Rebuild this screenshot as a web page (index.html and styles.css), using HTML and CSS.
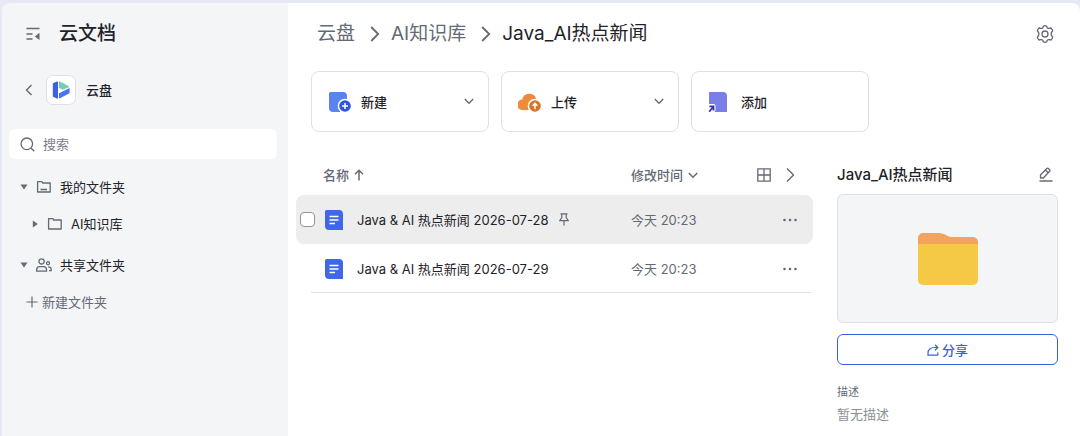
FILE: index.html
```html
<!DOCTYPE html>
<html lang="zh-CN">
<head>
  <meta charset="UTF-8">
  <meta name="viewport" content="width=device-width, initial-scale=1.0">
  <title>云文档</title>
  <link rel="stylesheet" href="styles.css">
</head>
<body>
  <div class="app">
    <aside class="sidebar">
      <div class="sidebar-header">
        <button class="icon-btn" type="button" aria-label="收起侧栏">
          <svg width="16" height="16" viewBox="0 0 16 16" fill="none" stroke="currentColor" stroke-width="1.4">
            <path d="M1.500 2.500h13M1.500 8h6M1.500 13h6"/>
            <path d="M14.500 6.800v7.200L9.800 10.400z" fill="currentColor" stroke="none"/>
          </svg>
        </button>
        <h1>云文档</h1>
      </div>
      <div class="space">
        <button class="icon-btn" type="button" aria-label="返回">
          <svg width="8" height="12" viewBox="0 0 8 12" fill="none" stroke="currentColor" stroke-width="1.4">
            <path d="M6.500 1 1.500 6l5 5"/>
          </svg>
        </button>
        <span class="space-logo">
          <svg width="18" height="18" viewBox="0 0 18 18">
            <path d="M.8 3Q.8 2.400 1.400 2.100L5 .5q1-.3 1 .6v15.800q0 .9-1 .6L1.400 15.900Q.8 15.600.8 15z" fill="#3f62dc"/>
            <path d="M7 .8q.2-.6 1-.2l8.800 4.700q.8.500 0 .9L10.500 8.800 7 6.800z" fill="#6fcdb8"/>
            <path d="M17.600 7v4.600q0 .7-.6 1L8 17.300q-1 .4-1-.5v-4.500z" fill="#4a73ee"/>
          </svg>
        </span>
        <span class="space-name">云盘</span>
      </div>
      <div class="search">
        <svg width="15" height="15" viewBox="0 0 15 15" fill="none" stroke="currentColor" stroke-width="1.3">
          <circle cx="6.800" cy="6.800" r="5.800"/>
          <path d="m11 11 3.200 3.200"/>
        </svg>
        <input type="search" placeholder="搜索" aria-label="搜索">
      </div>
      <nav class="tree">
        <a class="tree-item" href="#">
          <svg class="caret" width="8" height="6" viewBox="0 0 8 6"><path d="M.5.5h7L4 5.600z" fill="currentColor"/></svg>
          <svg class="tree-icon" width="16" height="14" viewBox="0 0 16 14" fill="none" stroke="currentColor" stroke-width="1.3" stroke-linejoin="round">
            <path d="M1.600 12V1.600h4.200l1 1.400h7.400v9zM4.500 9.500h6.500"/>
          </svg>
          我的文件夹
        </a>
        <a class="tree-item child" href="#">
          <svg class="caret" width="8" height="8" viewBox="0 0 8 8"><path d="M1.800.6v6.800L6.800 4z" fill="currentColor"/></svg>
          <svg class="tree-icon" width="16" height="14" viewBox="0 0 16 14" fill="none" stroke="currentColor" stroke-width="1.3" stroke-linejoin="round">
            <path d="M1.600 12V1.600h4.200l1 1.400h7.400v9z"/>
          </svg>
          AI知识库
        </a>
        <a class="tree-item group" href="#">
          <svg class="caret" width="8" height="6" viewBox="0 0 8 6"><path d="M.5.5h7L4 5.600z" fill="currentColor"/></svg>
          <svg class="tree-icon" width="16" height="14" viewBox="0 0 16 14" fill="none" stroke="currentColor" stroke-width="1.300">
            <circle cx="5.600" cy="3.400" r="2.600"/>
            <path d="M.7 13.200v-1.600c0-1.800 1.300-3 3-3h3.800c1.700 0 3 1.200 3 3v1.600z"/>
            <circle cx="12" cy="5.200" r="1.500"/>
            <path d="M12.200 8.800c1.800 0 3 1.200 3 2.600v1.200h-2.200"/>
          </svg>
          共享文件夹
        </a>
        <button class="new-folder" type="button">
          <svg width="12" height="12" viewBox="0 0 12 12" fill="none" stroke="currentColor" stroke-width="1.200">
            <path d="M6 .5v11M.5 6h11"/>
          </svg>
          新建文件夹
        </button>
      </nav>
    </aside>

    <main class="main">
      <header class="topbar">
        <nav class="breadcrumb" aria-label="路径">
          <a href="#">云盘</a>
          <svg width="10" height="16" viewBox="0 0 10 16" fill="none" stroke="currentColor" stroke-width="1.800"><path d="m1.200 1 7 7-7 7"/></svg>
          <a href="#">AI知识库</a>
          <svg width="10" height="16" viewBox="0 0 10 16" fill="none" stroke="currentColor" stroke-width="1.800"><path d="m1.200 1 7 7-7 7"/></svg>
          <span class="current">Java_AI热点新闻</span>
        </nav>
        <button class="icon-btn" type="button" aria-label="设置">
          <svg width="18" height="18" viewBox="0 0 18 18" fill="none" stroke="currentColor" stroke-width="1.300" stroke-linejoin="round">
            <path d="M7.400 1q1.600-.5 3.200 0l.6 1.700q.9.900 2 .7l1.800-.4q1.200 1.200 1.700 2.900l-1.300 1.600q-.5 1.500 0 3l1.300 1.600q-.5 1.700-1.700 2.900l-1.800-.4q-1.100-.2-2 .7l-.6 1.700q-1.600.5-3.200 0l-.6-1.700q-.9-.9-2-.7L3 15q-1.200-1.200-1.700-2.900l1.300-1.600q.5-1.500 0-3L1.300 5.900Q1.800 4.200 3 3l1.800.4q1.100.2 2-.7z"/>
            <circle cx="9" cy="9" r="3"/>
          </svg>
        </button>
      </header>

      <div class="actions">
        <button class="action" type="button">
          <svg width="24" height="22" viewBox="0 0 24 22">
            <path d="M1 2.500A1.500 1.500 0 0 1 2.500 1H15a4 4 0 0 1 4 4v16H5a4 4 0 0 1-4-4z" fill="#5b83f0"/>
            <circle cx="17" cy="15" r="7.300" fill="#fff"/>
            <circle cx="17" cy="15" r="5.800" fill="#2f55d8"/>
            <path d="M17 12v6M14 15h6" stroke="#fff" stroke-width="1.500"/>
          </svg>
          <span>新建</span>
          <svg class="arrow" width="10" height="7" viewBox="0 0 10 7" fill="none" stroke="currentColor" stroke-width="1.300"><path d="m.8 1 4.200 4.300L9.200 1"/></svg>
        </button>
        <button class="action" type="button">
          <svg width="24" height="22" viewBox="0 0 24 22">
            <path d="M5 19A5.300 5.300 0 0 1 4.200 8.400a7.300 7.300 0 0 1 14-.6A5.800 5.800 0 0 1 18 19z" fill="#ee8a3c"/>
            <circle cx="17" cy="15" r="7.300" fill="#fff"/>
            <circle cx="17" cy="15" r="5.800" fill="#d8742a"/>
            <path d="M17 18.200v-5.600m-2.400 2.200 2.400-2.400 2.400 2.400" fill="none" stroke="#fff" stroke-width="1.500"/>
          </svg>
          <span>上传</span>
          <svg class="arrow" width="10" height="7" viewBox="0 0 10 7" fill="none" stroke="currentColor" stroke-width="1.300"><path d="m.8 1 4.200 4.300L9.200 1"/></svg>
        </button>
        <button class="action" type="button">
          <svg width="24" height="22" viewBox="0 0 24 22">
            <path d="M1 1h14a4 4 0 0 1 4 4v16H1z" fill="#7a7fe8"/>
            <path d="M0 13h5.500a2 2 0 0 1 2 2v4l-1.500 3H0z" fill="#fff"/>
            <path d="m1.200 20.800 4-5M1.400 15.300h4.100v4.200" fill="none" stroke="#3a32ae" stroke-width="1.800"/>
          </svg>
          <span>添加</span>
        </button>
      </div>

      <div class="content">
        <table class="files">
          <colgroup>
            <col class="col-check">
            <col class="col-name">
            <col class="col-time">
            <col class="col-more">
          </colgroup>
          <thead>
            <tr>
              <th colspan="2" class="th-name">
                <span class="sort">
                  名称
                  <svg width="10" height="12" viewBox="0 0 10 12" fill="none" stroke="currentColor" stroke-width="1.500"><path d="M5 11.500V1.500M1 5.300l4-4 4 4"/></svg>
                </span>
              </th>
              <th>
                <span class="sort">
                  修改时间
                  <svg width="10" height="7" viewBox="0 0 10 7" fill="none" stroke="currentColor" stroke-width="1.500"><path d="m.8 1 4.200 4.300L9.200 1"/></svg>
                </span>
              </th>
              <th>
                <div class="view-tools">
                  <button class="icon-btn" type="button" aria-label="网格视图">
                    <svg width="14" height="14" viewBox="0 0 14 14" fill="none" stroke="currentColor" stroke-width="1.300"><path d="M.8.8h12.400v12.400H.8zM7 .8v12.400M.8 7h12.400"/></svg>
                  </button>
                  <button class="icon-btn" type="button" aria-label="收起详情">
                    <svg width="9" height="14" viewBox="0 0 9 14" fill="none" stroke="currentColor" stroke-width="1.400"><path d="m1 .6 6.500 6.400L1 13.400"/></svg>
                  </button>
                </div>
              </th>
            </tr>
          </thead>
          <tbody>
            <tr class="active">
              <td class="check"><input type="checkbox" aria-label="选择 Java &amp; AI 热点新闻 2026-07-28"></td>
              <td>
                <div class="file">
                  <svg width="18" height="20" viewBox="0 0 18 20">
                    <path d="M0 1.500A1.500 1.500 0 0 1 1.500 0H14a4 4 0 0 1 4 4v16H4a4 4 0 0 1-4-4z" fill="#4068e6"/>
                    <path d="M4.500 6.500h9M4.500 10h9M4.500 13.500h5.500" stroke="#fff" stroke-width="1.300"/>
                  </svg>
                  <a href="#">Java &amp; AI 热点新闻 2026-07-28</a>
                  <svg class="pin" width="10" height="13" viewBox="0 0 10 13" fill="none" stroke="currentColor" stroke-width="1.200"><path d="M1.500.8h7M2.800.8v3.700L.8 7.600h8.400L7.200 4.500V.8M5 7.600v5"/></svg>
                </div>
              </td>
              <td class="time">今天 20:23</td>
              <td class="more">
                <button class="icon-btn" type="button" aria-label="更多">
                  <svg width="14" height="4" viewBox="0 0 14 4" fill="currentColor"><circle cx="1.500" cy="2" r="1.300"/><circle cx="7" cy="2" r="1.300"/><circle cx="12.500" cy="2" r="1.300"/></svg>
                </button>
              </td>
            </tr>
            <tr>
              <td></td>
              <td>
                <div class="file">
                  <svg width="18" height="20" viewBox="0 0 18 20">
                    <path d="M0 1.500A1.500 1.500 0 0 1 1.500 0H14a4 4 0 0 1 4 4v16H4a4 4 0 0 1-4-4z" fill="#4068e6"/>
                    <path d="M4.500 6.500h9M4.500 10h9M4.500 13.500h5.500" stroke="#fff" stroke-width="1.300"/>
                  </svg>
                  <a href="#">Java &amp; AI 热点新闻 2026-07-29</a>
                </div>
              </td>
              <td class="time">今天 20:23</td>
              <td class="more">
                <button class="icon-btn" type="button" aria-label="更多">
                  <svg width="14" height="4" viewBox="0 0 14 4" fill="currentColor"><circle cx="1.500" cy="2" r="1.300"/><circle cx="7" cy="2" r="1.300"/><circle cx="12.500" cy="2" r="1.300"/></svg>
                </button>
              </td>
            </tr>
          </tbody>
        </table>

        <aside class="details">
          <div class="details-header">
            <h2>Java_AI热点新闻</h2>
            <button class="icon-btn" type="button" aria-label="编辑">
              <svg width="14" height="15" viewBox="0 0 14 15" fill="none" stroke="currentColor" stroke-width="1.300" stroke-linejoin="round">
                <path d="M1.500 11V8L7.800 1.500q.8-.8 1.600 0l1.200 1.200q.8.800 0 1.600L4.300 11zM6.400 3l2.800 2.800M.5 14h13"/>
              </svg>
            </button>
          </div>
          <div class="preview">
            <svg width="60" height="52" viewBox="0 0 60 52">
              <path d="M0 5a5 5 0 0 1 5-5h16c6 0 8 4 13 4h21a5 5 0 0 1 5 5v8H0z" fill="#f2a35e"/>
              <path d="M0 11h60v36a5 5 0 0 1-5 5H5a5 5 0 0 1-5-5z" fill="#f5c945"/>
            </svg>
          </div>
          <button class="share" type="button">
            <svg width="12" height="12" viewBox="0 0 12 12" fill="none" stroke="currentColor" stroke-width="1.200">
              <path d="M8 .8 10.800 3.500 8 6.200M10.600 3.500H7.500C3.500 3.500 1 5.600 1 9.200v1.900h9.800V8.500"/>
            </svg>
            分享
          </button>
          <h3>描述</h3>
          <p>暂无描述</p>
        </aside>
      </div>
    </main>
  </div>
</body>
</html>
```
FILE: styles.css
```css
:root {
  --text: #1f2329;
  --text-sec: #646a73;
  --text-light: #8a9096;
  --bg-side: #f3f5f7;
  --border: #dee0e3;
  --blue: #3a62d8;
}
* {
  box-sizing: border-box;
}
body {
  margin: 0;
  background: #e7e8f6;
  color: var(--text);
  font-family: Inter, "Noto Sans CJK SC", sans-serif;
  font-size: 13px;
  line-height: 20px;
}
h1, h2, h3, p {
  margin: 0;
}
a {
  color: inherit;
  text-decoration: none;
}
button {
  font: inherit;
  color: inherit;
  background: none;
  border: none;
  padding: 0;
  cursor: pointer;
}
svg {
  display: block;
  flex: none;
}
.icon-btn {
  display: flex;
  color: var(--text-sec);
}
.app {
  display: flex;
  min-height: 100vh;
  padding: 3px 0 0 2px;
}

/* SIDEBAR */
.sidebar {
  flex: 0 0 286px;
  background: var(--bg-side);
  border-radius: 8px 0 0 0;
}
.sidebar-header {
  display: flex;
  align-items: center;
  gap: 18px;
  height: 62px;
  padding-left: 23px;
}
.sidebar-header h1 {
  font-size: 19px;
  line-height: 28px;
  font-weight: 500;
}
.space {
  display: flex;
  align-items: center;
  height: 50px;
  padding-left: 23px;
}
.space-logo {
  display: flex;
  align-items: center;
  justify-content: center;
  width: 30px;
  height: 30px;
  margin: 0 10px 0 13px;
  background: #fff;
  border: 1px solid var(--border);
  border-radius: 7px;
}
.space-name {
  font-weight: 500;
}
.search {
  display: flex;
  align-items: center;
  gap: 8px;
  height: 30px;
  margin: 14px 11px 9px 7px;
  padding: 0 11px;
  background: #fff;
  border-radius: 6px;
  color: var(--text-sec);
}
.search input {
  flex: 1;
  min-width: 0;
  padding: 0;
  border: none;
  outline: none;
  background: none;
  font: inherit;
  color: var(--text);
}
.search input::placeholder {
  color: #7b8188;
}
.tree-item,
.new-folder {
  display: flex;
  align-items: center;
  height: 37px;
  padding-left: 18px;
}
.tree-item svg {
  color: var(--text-sec);
}
.tree-icon {
  margin: 0 8px 0 8px;
}
.tree-item.child {
  padding-left: 29px;
}
.tree-item.group {
  margin-top: 4px;
}
.new-folder {
  gap: 4px;
  padding-left: 24px;
  color: var(--text-sec);
}

/* MAIN */
.main {
  flex: 1;
  min-width: 0;
  background: #fff;
  border-radius: 0 8px 0 0;
}
.topbar {
  display: flex;
  align-items: center;
  justify-content: space-between;
  height: 62px;
  padding: 0 26px 0 29px;
}
.breadcrumb {
  display: flex;
  align-items: center;
  font-size: 19px;
  line-height: 28px;
  color: var(--text-sec);
}
.breadcrumb svg {
  margin: 0 11px 0 15px;
}
.breadcrumb .current {
  color: var(--text);
}
.actions {
  display: flex;
  gap: 12px;
  padding: 6px 22px 0 23px;
}
.action {
  display: flex;
  align-items: center;
  flex: 0 1 178px;
  height: 61px;
  padding: 0 14px 0 16px;
  border: 1px solid var(--border);
  border-radius: 8px;
  font-weight: 500;
}
.action span {
  margin-left: 9px;
}
.action .arrow {
  margin-left: auto;
  color: var(--text-sec);
}
.content {
  display: flex;
  align-items: flex-start;
  gap: 24px;
  padding: 23px 22px 16px 8px;
}

/* FILE LIST */
.files {
  flex: 1;
  min-width: 0;
  table-layout: fixed;
  border-collapse: separate;
  border-spacing: 0;
}
.col-check {
  width: 29px;
}
.col-time {
  width: 120px;
}
.col-more {
  width: 62px;
}
.files th {
  height: 40px;
  padding: 0;
  text-align: left;
  font-weight: 500;
  color: var(--text-sec);
}
.files .th-name {
  padding-left: 27px;
}
.sort {
  display: flex;
  align-items: center;
  gap: 5px;
}
.view-tools {
  display: flex;
  align-items: center;
  justify-content: space-between;
  padding: 0 18px 0 6px;
}
.files td {
  height: 49px;
  padding: 0;
}
.files .active td {
  background: #ededee;
}
.files .active td:first-child {
  border-radius: 8px 0 0 8px;
}
.files .active td:last-child {
  border-radius: 0 8px 8px 0;
}
.files tbody tr {
  position: relative;
}
.files tbody tr:last-child::after {
  content: "";
  position: absolute;
  left: 15px;
  right: 2px;
  bottom: 0;
  border-bottom: 1px solid var(--border);
}
.check input {
  display: block;
  appearance: none;
  width: 15px;
  height: 15px;
  margin: 0 0 0 4px;
  background: #fff;
  border: 1px solid #8f959e;
  border-radius: 4px;
}
.check input:checked {
  background: var(--blue);
}
.file {
  display: flex;
  align-items: center;
  white-space: nowrap;
}
.file a {
  margin: 0 11px 0 14px;
}
.file .pin,
.files .time {
  color: var(--text-sec);
}
.more .icon-btn {
  margin-left: 32px;
}

/* DETAILS */
.details {
  flex: 0 0 221px;
}
.details-header {
  display: flex;
  align-items: center;
  justify-content: space-between;
  height: 39px;
  padding-right: 5px;
}
.details-header h2 {
  font-size: 15px;
  font-weight: 500;
}
.preview {
  display: flex;
  align-items: center;
  justify-content: center;
  height: 129px;
  background: var(--bg-side);
  border: 1px solid var(--border);
  border-radius: 6px;
}
.share {
  display: flex;
  align-items: center;
  justify-content: center;
  gap: 3px;
  width: 100%;
  height: 31px;
  margin: 11px 0 17px;
  border: 1px solid var(--blue);
  border-radius: 6px;
  color: var(--blue);
  font-weight: 500;
}
.details h3 {
  font-size: 11px;
  font-weight: 400;
  color: var(--text-sec);
}
.details p {
  margin-top: 2px;
  color: var(--text-light);
}

@media (max-width: 800px) {
  .sidebar {
    flex-basis: 200px;
  }
  .content {
    flex-direction: column;
  }
  .files,
  .details {
    flex: none;
    width: 100%;
  }
}
```
